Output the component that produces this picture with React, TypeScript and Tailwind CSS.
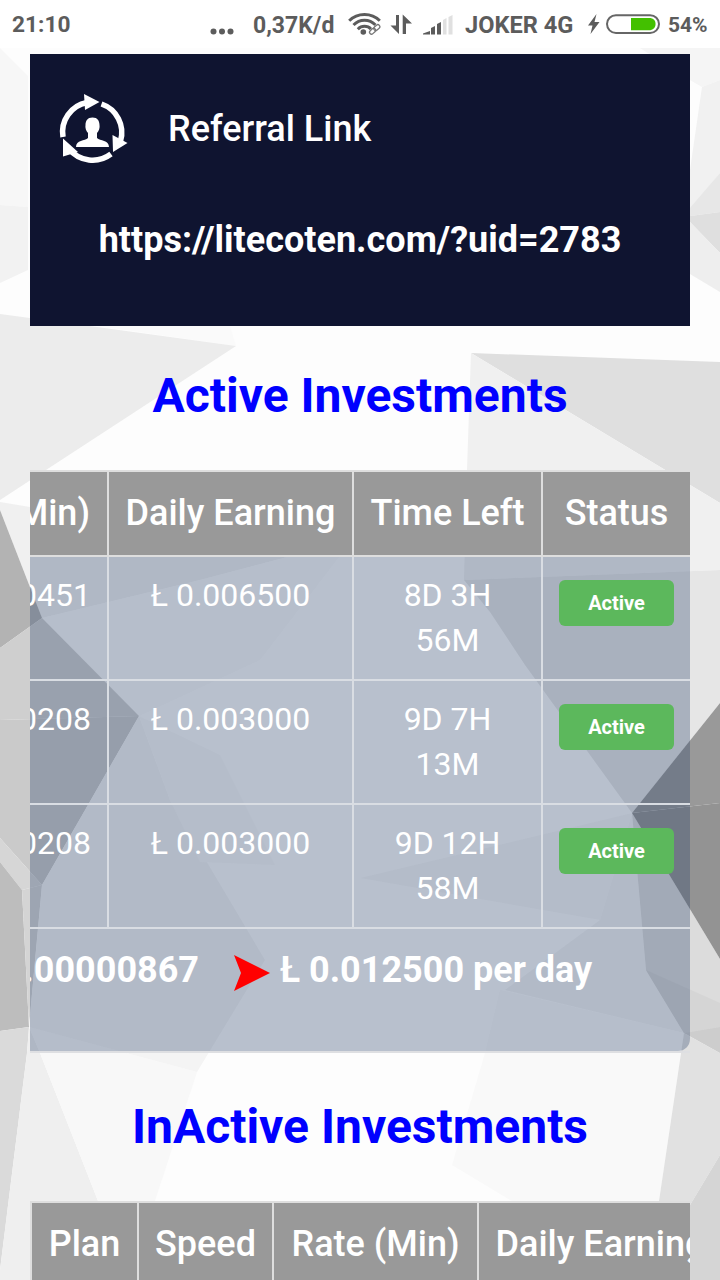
import React from 'react';

const facets: { points: string; fill: string }[] = [
  { points: '0,48 28,76 28,207 0,205', fill: '#f7f7f7' },
  { points: '0,205 28,207 28,270 0,283', fill: '#f2f2f2' },
  { points: '97,326 230,326 236,346', fill: '#fafafa' },
  { points: '0,314 97,327 236,346 0,500', fill: '#ececec' },
  { points: '0,502 30,507 352,540 200,580 42,618 0,510', fill: '#f0f0f0' },
  { points: '42,618 200,580 352,540 260,660 139,716', fill: '#f9f9f9' },
  { points: '0,510 42,618 0,648', fill: '#b3b3b3' },
  { points: '0,648 42,618 139,716 0,720', fill: '#cfcfcf' },
  { points: '0,720 139,716 42,885 0,838', fill: '#cacaca' },
  { points: '0,838 42,885 22,890 0,862', fill: '#d6d6d6' },
  { points: '0,862 22,890 29,1027 0,1031', fill: '#bdbdbd' },
  { points: '22,890 42,885 35,960 29,1027', fill: '#d4d4d4' },
  { points: '0,1031 29,1027 27,1053 0,1270', fill: '#dadada' },
  { points: '29,1027 40,1053 98,1201 130,1280 0,1280 0,1270 27,1053', fill: '#efefef' },
  { points: '29,1027 197,1072 155,1201 130,1280 98,1201 40,1053', fill: '#f8f8f8' },
  { points: '139,716 170,800 265,960 197,1072 29,1027 42,885', fill: '#f4f4f4' },
  { points: '139,716 220,755 275,865 200,862 170,800', fill: '#f8f8f8' },
  { points: '471,353 720,362 720,503', fill: '#dfdfdf' },
  { points: '471,353 720,503 720,570 464,580 467,470', fill: '#f0f0f0' },
  { points: '464,580 720,570 720,703 632,813 525,665 490,612', fill: '#e6e6e6' },
  { points: '360,878 632,813 600,920', fill: '#f7f7f7' },
  { points: '632,813 646,970 684,1033 505,990 600,920', fill: '#f4f4f4' },
  { points: '632,813 720,959 720,1053 684,1033 646,970', fill: '#dcdcdc' },
  { points: '646,970 720,1003 720,1027 684,1033', fill: '#d5d5d5' },
  { points: '684,1033 720,1027 720,1053', fill: '#cdcdcd' },
  { points: '632,813 720,703 720,803', fill: '#999999' },
  { points: '632,813 720,803 720,959', fill: '#939393' },
  { points: '500,990 684,1033 659,1201 650,1280 560,1230 452,1165 485,1053', fill: '#f9f9f9' },
  { points: '684,1033 720,1053 720,1155 690,1205 650,1280 659,1201', fill: '#e1e1e1' },
  { points: '720,1155 690,1205 680,1280 720,1280', fill: '#d5d5d5' },
  { points: '640,48 720,48 720,80 702,87 690,80', fill: '#f5f5f5' },
  { points: '702,87 720,80 720,173 690,210 690,170', fill: '#f1f1f1' },
  { points: '720,173 690,208 690,216 720,212', fill: '#e7e7e7' },
  { points: '690,216 720,212 720,253 690,222', fill: '#dfdfdf' },
  { points: '690,222 720,253 720,292 690,274', fill: '#eeeeee' },
];

const rows = [
  { rate: '0.00000451', daily: 'Ł 0.006500', left: ['8D 3H', '56M'] },
  { rate: '0.00000208', daily: 'Ł 0.003000', left: ['9D 7H', '13M'] },
  { rate: '0.00000208', daily: 'Ł 0.003000', left: ['9D 12H', '58M'] },
];

const Background: React.FC = () => (
  <svg className="absolute inset-0 -z-10" width="720" height="1280" viewBox="0 0 720 1280">
    <rect width="720" height="1280" fill="#fdfdfd" />
    {facets.map((f) => (
      <polygon key={f.points} points={f.points} fill={f.fill} />
    ))}
  </svg>
);

const StatusBar: React.FC = () => (
  <header className="flex h-12 shrink-0 items-center bg-white font-bold leading-none text-[#5c5c5c]">
    <span className="ml-3 w-[198px] pt-[3px] text-[22.7px]">21:10</span>
    <svg width="24" height="48" viewBox="0 0 24 48" fill="#5c5c5c">
      <circle cx="3.5" cy="31.5" r="3" />
      <circle cx="12" cy="31.5" r="3" />
      <circle cx="20.5" cy="31.5" r="3" />
    </svg>
    <span className="ml-[19px] w-[95px] whitespace-nowrap pt-0.5 text-[23px]">0,37K/d</span>
    <svg width="106" height="48" viewBox="348 0 106 48" fill="none">
      <g stroke="#5c5c5c" strokeWidth="3">
        <path d="M349.2 20.7C357.5 12.3 371.5 12.3 379.8 20.7" />
        <path d="M353.5 25C359.7 18.6 369.3 18.6 375.5 25" />
        <path d="M357.8 29.2C361.6 25.4 367.4 25.4 371.2 29.2" />
      </g>
      <circle cx="363.3" cy="32" r="2.8" fill="#5c5c5c" />
      <g stroke="#fff" strokeWidth="6">
        <path d="M370 34L380 25" />
      </g>
      <g stroke="#777" strokeWidth="1.3">
        <rect x="369.2" y="29.2" width="6.8" height="4" rx="2" transform="rotate(-42 372.6 31.2)" />
        <rect x="373.4" y="25.6" width="6.8" height="4" rx="2" transform="rotate(-42 376.8 27.6)" />
      </g>
      <path d="M396 15H399V34L390.5 25.5H396Z" fill="#5c5c5c" />
      <path d="M402.7 34V14.5L412 23.5H406V34Z" fill="#5c5c5c" />
      <path d="M423 34.5V33.5L430 31V34.5Z" fill="#5c5c5c" />
      <path d="M431 34.5V28L435 26V34.5Z" fill="#5c5c5c" />
      <path d="M437 34.5V24L441 22V34.5Z" fill="#5c5c5c" />
      <path d="M443 34.5V20L446.5 18V34.5ZM448.5 34.5V17L452.5 15V34.5Z" fill="#e0e0e0" />
    </svg>
    <span className="ml-[11px] w-[121px] whitespace-nowrap pt-[3px] text-[23.6px]">JOKER 4G</span>
    <svg width="74" height="48" viewBox="586 0 74 48" fill="none">
      <path d="M596.5 14L588 25.5H592.5L590.5 34L599.5 22H594.5Z" fill="#5c5c5c" />
      <rect x="607" y="15.2" width="52" height="17.8" rx="8.9" stroke="#666" strokeWidth="2" />
      <path d="M631 18H650.5A6.2 6.2 0 0 1 650.5 30.2H631Z" fill="#43c000" />
    </svg>
    <span className="ml-2 pt-[3px] text-[21px]">54%</span>
  </header>
);

const ReferralCard: React.FC = () => (
  <section className="mx-[30px] mt-1.5 h-[272px] shrink-0 bg-[#0f1430] text-white">
    <div className="flex h-[150px] items-center pl-7">
      <svg width="72" height="74" viewBox="58 92 72 74" fill="none">
        <g stroke="#fff" strokeWidth="5.5">
          <path d="M63 137A30 30 0 0 1 87 102.5" />
          <path d="M101.5 104A30 30 0 0 1 120.5 141" />
          <path d="M111 154A30.5 30.5 0 0 1 69 149" />
        </g>
        <path d="M84 94L99.5 102L85 110Z" fill="#fff" />
        <path d="M112.5 135L127.5 143L113 152Z" fill="#fff" />
        <path d="M63 138.5L78 152L63 156.5Z" fill="#fff" />
        <path
          d="M92.5 117.5C87.5 117.5 85.5 121 85.5 125C85 127.5 86 131 88 133V138C85 141 76 140 76 147H109C109 140 100 141 97 138V133C99 131 100 127.5 99.5 125C99.5 121 97.5 117.5 92.5 117.5Z"
          fill="#fff"
        />
      </svg>
      <span className="ml-[38px] text-4xl font-medium">Referral Link</span>
    </div>
    <p className="mt-[11px] text-center text-4xl font-bold leading-[50px]">https://litecoten.com/?uid=2783</p>
  </section>
);

const HeadCell: React.FC<{ children: React.ReactNode; last?: boolean }> = ({ children, last }) => (
  <div
    className={`flex h-[83px] items-center justify-center overflow-hidden whitespace-nowrap border-[#dedede] pb-0.5 text-4xl font-medium ${
      last ? '' : 'border-r-2'
    }`}
  >
    {children}
  </div>
);

const ActiveTable: React.FC = () => (
  <section className="mx-[30px] shrink-0 overflow-hidden text-white">
    <div className="grid grid-cols-[79px_245px_189px_147px] border-y-2 border-[#dedede] bg-[#999999]">
      <HeadCell>
        <span className="flex w-full justify-end pr-[17px]">Rate (Min)</span>
      </HeadCell>
      <HeadCell>Daily Earning</HeadCell>
      <HeadCell>Time Left</HeadCell>
      <HeadCell last>Status</HeadCell>
    </div>
    <div className="rounded-br-[12px] bg-[rgba(41,66,105,0.32)]">
      {rows.map((row, i) => (
        <div
          key={i}
          className="grid h-[124px] grid-cols-[79px_245px_189px_147px] border-b-2 border-[#d9dde3] text-[32px] leading-[45px]"
        >
          <div className="flex justify-end overflow-hidden border-r-2 border-[#d9dde3] pr-4 pt-4">{row.rate}</div>
          <div className="border-r-2 border-[#d9dde3] pt-4 text-center">{row.daily}</div>
          <div className="border-r-2 border-[#d9dde3] pt-4 text-center">
            {row.left.map((line) => (
              <div key={line}>{line}</div>
            ))}
          </div>
          <div className="pl-4 pt-[23px]">
            <button className="block h-[46px] w-[115px] rounded-md bg-[#5cb85c] text-xl font-bold leading-none">
              Active
            </button>
          </div>
        </div>
      ))}
      <div className="flex h-[122px] pt-4 text-4xl font-bold leading-[50px]">
        <span className="flex w-[169px] justify-end overflow-hidden whitespace-nowrap">Ł 0.00000867</span>
        <svg className="ml-[35px] mt-2.5" width="36" height="37" viewBox="0 0 36 37">
          <path d="M0 0L36 18L0 36L7 18Z" fill="#ff0000" />
        </svg>
        <span className="ml-2.5 whitespace-nowrap">Ł 0.012500 per day</span>
      </div>
    </div>
    <div className="h-0.5 bg-[#dedfe2]" />
  </section>
);

const InactiveTable: React.FC = () => (
  <section className="mx-[30px] shrink-0 overflow-hidden text-white">
    <div className="grid w-[694px] grid-cols-[107px_135px_205px_243px] border-2 border-[#dedede] bg-[#999999]">
      <HeadCell>Plan</HeadCell>
      <HeadCell>Speed</HeadCell>
      <HeadCell>Rate (Min)</HeadCell>
      <HeadCell last>Daily Earning</HeadCell>
    </div>
  </section>
);

const Title: React.FC<{ children: React.ReactNode }> = ({ children }) => (
  <h2 className="shrink-0 text-center text-5xl font-bold leading-[66px] text-[#0000ff]">{children}</h2>
);

export default function App() {
  return (
    <div className="relative isolate flex h-[1280px] w-[720px] flex-col overflow-hidden font-['Roboto',sans-serif]">
      <Background />
      <StatusBar />
      <ReferralCard />
      <div className="h-[144px] shrink-0 pt-[37px]">
        <Title>Active Investments</Title>
      </div>
      <ActiveTable />
      <div className="h-[148px] shrink-0 pt-[41px]">
        <Title>InActive Investments</Title>
      </div>
      <InactiveTable />
    </div>
  );
}
